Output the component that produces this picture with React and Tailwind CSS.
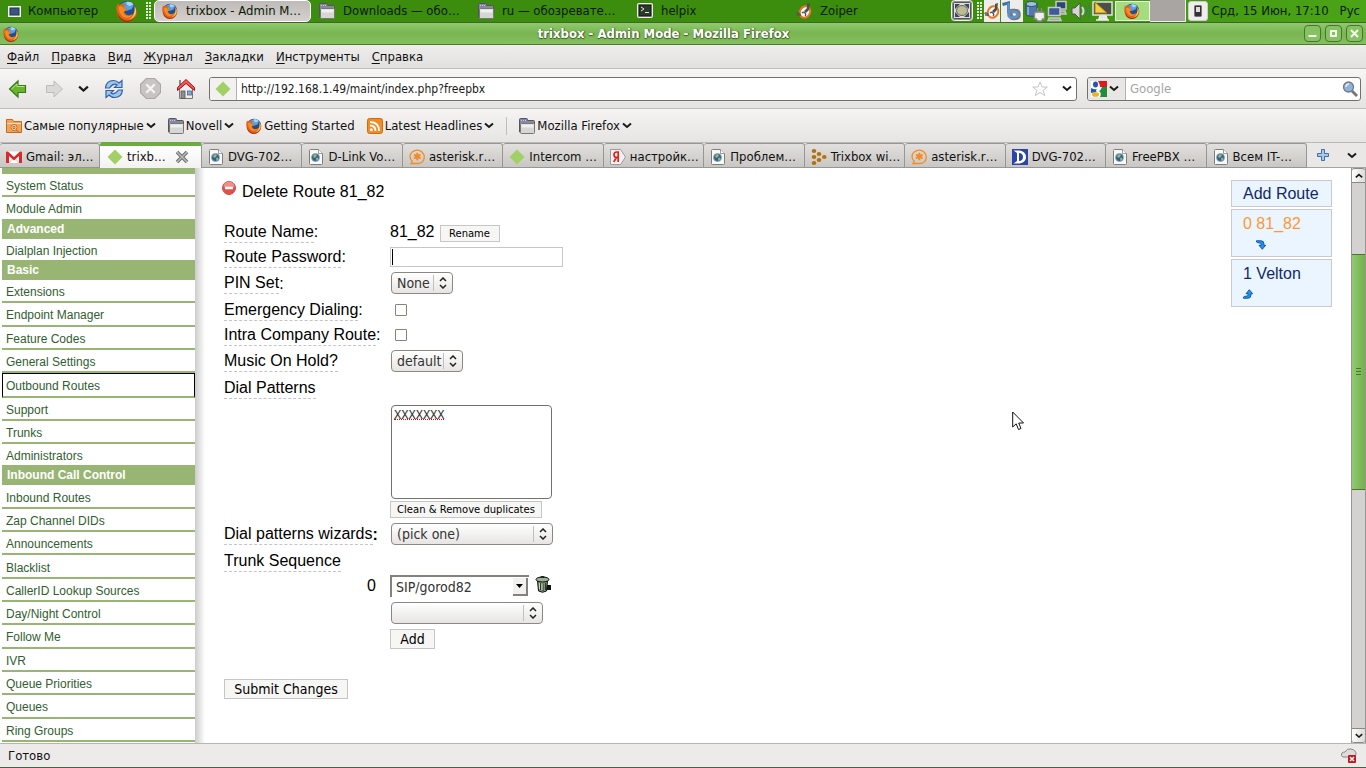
import React from "react";

const UI = "font-['DejaVu_Sans_Condensed','DejaVu_Sans',sans-serif]";

function Firefox({ className = "size-4" }) {
  return (
    <svg viewBox="0 0 32 32" className={`${className} shrink-0`} aria-hidden="true">
      <circle cx="16" cy="16" r="14.5" fill="#1d4f94" />
      <path d="M7 7C12 1 22 1 26 7l-3 6-8 3-6-2z" fill="#5b9fdc" />
      <path d="M15 3c4-1 8 0 10 3l-5 3-4-2z" fill="#a9d3f3" />
      <path d="M2 5c1 1 2 2 3 2 3-2 6-2 9 0-2 1-3 3-3 5l5 1c0 2-3 3-4 4 1 5 8 7 13 3 3-3 3-8 1-13 4 4 5 9 4 14-2 7-8 10-14 10C7 31 1 25 1 16 0 12 1 8 2 5z" fill="#e2631a" />
      <path d="M4 10c2-1 4-1 6 0 0 2 2 3 5 3-1 2-4 3-4 5 1 5 8 7 13 3-2 6-12 7-16 1-3-4-4-8-4-12z" fill="#f48c20" />
      <path d="M27 9c3 5 3 10 0 14-2 3-5 5-9 6 8-4 10-12 9-20z" fill="#fcd34a" />
      <path d="M2 16c1 7 6 13 14 14 5 0 9-2 12-6-3 6-8 8-13 8C7 31 2 25 2 16z" fill="#a82d0c" />
    </svg>
  );
}

function Folder({ className = "size-4" }) {
  return (
    <svg viewBox="0 0 16 16" className={`${className} shrink-0`} aria-hidden="true">
      <path d="M.5 14V1.500Q.5.5 1.500.5h6q1 0 1 1v1h6q1 0 1 1V14z" fill="#8b8b94" stroke="#55555c" />
      <path d="M1.500 1.500h6v2h-6z" fill="#7d7dc0" />
      <path d="M2 2.500h5" stroke="#c9c9ee" strokeDasharray="1 1" />
      <path d="M1.500 6.500Q1.500 5.500 2.500 5.500h12q1 0 1 1v8q0 1-1 1h-12q-1 0-1-1z" fill="#d6d6d4" stroke="#77777a" />
      <path d="M2.500 6.500h12v3h-12z" fill="#efefee" />
    </svg>
  );
}

function Chevron({ className = "w-[10px]" }) {
  return (
    <svg viewBox="0 0 10 7" className={`${className} shrink-0`} aria-hidden="true">
      <path d="M1 1.500l4 3.500 4-3.500" fill="none" stroke="#1a1a1a" strokeWidth="2" />
    </svg>
  );
}

function Diamond() {
  return (
    <svg viewBox="0 0 16 16" className="size-4 shrink-0" aria-hidden="true">
      <path d="M8 .5L15.500 8 8 15.500.5 8z" fill="#a2d067" />
    </svg>
  );
}

function GmailIcon() {
  return (
    <svg viewBox="0 0 16 16" className="size-4 shrink-0" aria-hidden="true">
      <rect x="0" y="2.500" width="16" height="11.500" rx="1" fill="#fff" />
      <path d="M3 14l4-5M13 14L9 9" stroke="#e3b6b3" />
      <path d="M0 14V3.500q0-1 1-1h1L8 8l6-5.500h1q1 0 1 1V14h-3V7l-5 4.500L3 7v7z" fill="#d9292b" />
    </svg>
  );
}

function PageGlobe() {
  return (
    <svg viewBox="0 0 16 16" className="size-4 shrink-0" aria-hidden="true">
      <path d="M1.500 1.500q0-1 1-1h8l4 4v10q0 1-1 1h-11q-1 0-1-1z" fill="#f8f8f7" stroke="#7d7e7c" />
      <path d="M10.500.5v4h4" fill="#fff" stroke="#9a9b99" />
      <circle cx="7.500" cy="8.500" r="4" fill="#2c5f9e" stroke="#8fa9c4" strokeWidth=".8" />
      <path d="M5 7l2-2 2 1-1 2-2 1zM8 9l2-.5.500 2-2 1.500z" fill="#9db85c" />
    </svg>
  );
}

function AsteriskIcon() {
  return (
    <svg viewBox="0 0 16 16" className="size-4 shrink-0" fill="none" stroke="#f58a1f" aria-hidden="true">
      <path d="M2 14.500h7c4 0 6.300-3 6.300-6.500S12 1.200 8.300 1.200 1 3.700 1 7.500c0 2 .8 3.500 2.200 4.800z" strokeWidth="1.300" />
      <path d="M8.300 3.800v7.400M5 5.700l6.600 3.700M11.600 5.700L5 9.400" strokeWidth="2" />
    </svg>
  );
}

function YandexIcon() {
  return (
    <svg viewBox="0 0 16 16" className="size-4 shrink-0" aria-hidden="true">
      <path d="M.5.5h10l5 7.500-5 7.500H.5z" fill="#f3f3f3" stroke="#9b9b9b" />
      <path d="M8.200 13V3H6.600C5 3 4 4 4 5.700S5 8.400 6.700 8.400h1.500M6.500 8.500L3.700 13" fill="none" stroke="#e0201b" strokeWidth="1.700" />
    </svg>
  );
}

function DotsIcon() {
  return (
    <svg viewBox="0 0 16 16" className="size-4 shrink-0" fill="#b3700f" aria-hidden="true">
      <ellipse cx="3" cy="2" rx="2.300" ry="2" />
      <ellipse cx="3" cy="8" rx="2.300" ry="2" />
      <ellipse cx="3" cy="14" rx="2.300" ry="2" />
      <ellipse cx="8" cy="5" rx="2.300" ry="2" />
      <ellipse cx="8" cy="11" rx="2.300" ry="2" />
      <ellipse cx="13.300" cy="8" rx="2.300" ry="2" />
    </svg>
  );
}

function DIcon() {
  return (
    <svg viewBox="0 0 16 16" className="size-4 shrink-0" aria-hidden="true">
      <rect width="16" height="16" fill="#2b44a8" />
      <path d="M1.500 1.500H6c5 0 8 2.500 8 6.500s-3 6.500-8 6.500H1.500L5 12V4z" fill="#fff" />
      <path d="M7 4c2.500 0 4 1.500 4 4s-1.500 4-4 4z" fill="#2b44a8" />
    </svg>
  );
}

function ZoiperIcon() {
  return (
    <svg viewBox="0 0 16 16" className="size-4 shrink-0" aria-hidden="true">
      <ellipse cx="9" cy="9" rx="5" ry="6" transform="rotate(30 9 9)" fill="#fff" stroke="#ee7226" strokeWidth="2" />
      <path d="M11 1l3-1-1 7-3 3-2-2 3-3z" fill="#4f4f52" />
      <path d="M6 10c2-2 5 1 3 3M1 11c0-2 2-1 3 0M1 12h4" stroke="#55555a" strokeWidth="1.300" fill="none" />
    </svg>
  );
}

function Grip() {
  return (
    <svg viewBox="0 0 6 18" className="h-[18px] w-[6px] shrink-0" fill="#e4efd9" aria-hidden="true">
      {[0, 3, 6, 9, 12, 15].map((y) => (
        <g key={y}>
          <rect x="0" y={y} width="2" height="2" />
          <rect x="3" y={y} width="2" height="2" />
        </g>
      ))}
    </svg>
  );
}

function Task({ icon, children, active }) {
  return (
    <button
      className={`mr-[2px] flex h-[22px] min-w-0 flex-[0_1_157px] items-center gap-2 rounded-[5px] border pr-[7px] text-left ${
        active ? "border-white bg-linear-to-b from-[#bdbab7] to-[#d4d1ce] pl-[7px]" : "border-transparent pl-[5px]"
      }`}
    >
      {icon}
      <span className="truncate">{children}</span>
    </button>
  );
}

function Tray() {
  return (
    <div className="flex h-full shrink-0 items-center">
      <svg viewBox="0 0 22 22" className="mr-1 size-[22px]" aria-hidden="true">
        <rect x=".5" y=".5" width="21" height="20" rx="3" fill="#8f918c" stroke="#f2f1f0" />
        <rect x="2.500" y="2.500" width="17" height="16" rx="1" fill="#dcdcda" stroke="#555" />
        <path d="M4 4h5L4 9zM18 4h-5l5 5zM4 17h5l-5-5zM18 17h-5l5-5z" fill="#33476b" />
        <ellipse cx="11" cy="10.500" rx="5.500" ry="5" fill="#bdbb94" stroke="#66674d" />
      </svg>
      <Grip />
      <span className="ml-px flex h-[22px] w-4 items-center bg-[#eeedeb]"><ZoiperIcon /></span>
      <svg viewBox="0 0 22 22" className="ml-px size-[22px] bg-[#eeedeb]" fill="none" aria-hidden="true">
        <path d="M1.500 4.500L7.500 3v10" stroke="#426fa9" strokeWidth="3" />
        <path d="M9.500 9v6q0 3 4 3t4-3.500-4-3.500h-3" stroke="#777b80" strokeWidth="4.500" />
        <path d="M7.500 3v12q0 2.500 4.500 2.500t4.500-3-4-3h-3" stroke="#5b93cc" strokeWidth="2.500" />
      </svg>
      <svg viewBox="0 0 22 22" className="ml-px size-[22px]" aria-hidden="true">
        <path d="M2 4v10c0 3 11 3 11 0V4z" fill="#5279ab" stroke="#2b4a75" />
        <ellipse cx="7.500" cy="4" rx="5.500" ry="2.500" fill="#a4bfdd" stroke="#2b4a75" />
        <path d="M4 7v8" stroke="#9fb9d8" strokeWidth="1.500" />
        <path d="M13.500 8v5M17.500 8v5M10.500 19v-5q0-2 2-2h6q2 0 2 2v5h-2l-1 2h-4l-1-2z" fill="#eeeeec" stroke="#8a8a88" strokeWidth="1.300" />
      </svg>
      <svg viewBox="0 0 22 22" className="ml-px size-[22px]" stroke="#c8c8c5" strokeWidth="1.500" aria-hidden="true">
        <rect x="9" y="1.500" width="10" height="7.500" fill="#29467a" />
        <path d="M10 11h8l1 3H9z" fill="#999" />
        <rect x="1.500" y="7.500" width="11.500" height="8" fill="#3b5c96" />
        <path d="M2 18h11l1 2.500H1z" fill="#9a9a98" />
      </svg>
      <svg viewBox="0 0 22 22" className="ml-px size-[22px]" fill="none" aria-hidden="true">
        <path d="M2 8h3l5-5v16l-5-5H2z" fill="#d5d5d3" stroke="#555" />
        <path d="M12 7q3 4 0 8" stroke="#d5d9dd" strokeWidth="2" />
        <path d="M15 5q4 6 0 12M18 4q4 7 0 14" stroke="#397a60" />
      </svg>
      <svg viewBox="0 0 22 22" className="size-[22px]" aria-hidden="true">
        <rect x="1" y="2" width="19" height="13" fill="#4d4d49" stroke="#e2e2de" strokeWidth="1.500" />
        <path d="M3 2v11h12z" fill="#f0cf45" stroke="#a77f11" />
        <path d="M8 16h6l1 3H7zM4 20h13" fill="#ddd" stroke="#eee" strokeWidth="1.500" />
      </svg>
      <span className="ml-px flex h-[20px] w-[35px] items-center justify-center border border-[#eef4e8] bg-[#a4dc80]"><Firefox /></span>
      <span className="h-[22px] w-[36px] border-r border-b border-[#eee] bg-[#a8a5a2]" />
      <span className="mr-1 ml-[2px] flex h-[20px] w-[20px] items-center justify-center rounded-[3px] border border-[#ccc] bg-[#efeeed]">
        <svg viewBox="0 0 8 12" className="h-3 w-2" aria-hidden="true">
          <rect x=".5" y=".5" width="7" height="11" rx="1" fill="#333" stroke="#777" />
          <rect x="2" y="2" width="4" height="5" fill="#ddd" />
        </svg>
      </span>
      <span className="whitespace-nowrap">Срд, 15 Июн, 17:10</span>
      <span className="mr-[6px] ml-[11px]">Рус</span>
    </div>
  );
}

function Panel() {
  return (
    <header className="flex h-[23px] items-center border-b border-[#48603a] bg-linear-to-r from-[#3c8c0e] from-70% to-[#4ba517] text-[13px] text-[#0c1a04]">
      <button className="ml-2 flex w-[108px] shrink-0 items-center gap-[7px]">
        <svg viewBox="0 0 13 11" className="w-[13px]" aria-hidden="true">
          <rect x=".5" y=".5" width="12" height="10" fill="#e9e9e7" stroke="#f4f4f2" />
          <rect x="2" y="2" width="9" height="7" fill="#3a5580" stroke="#1f3354" />
        </svg>
        Компьютер
      </button>
      <button aria-label="Firefox"><Firefox className="size-[22px]" /></button>
      <span className="mr-[2px] ml-2"><Grip /></span>
      <nav className="flex min-w-0 flex-1">
        <Task active icon={<Firefox />}>trixbox - Admin M…</Task>
        <Task icon={<Folder />}>Downloads — обо…</Task>
        <Task icon={<Folder />}>ru — обозревате…</Task>
        <Task
          icon={
            <svg viewBox="0 0 16 16" className="size-4 shrink-0" aria-hidden="true">
              <rect x=".5" y=".5" width="15" height="14" rx="1" fill="#c9c9c5" stroke="#eee" />
              <rect x="2" y="2" width="12" height="11" fill="#2c3a2a" stroke="#111" />
              <path d="M4 4l3 2-3 2M8 9.500h4" stroke="#dfe8d8" fill="none" />
            </svg>
          }
        >
          helpix
        </Task>
        <Task icon={<ZoiperIcon />}>Zoiper</Task>
      </nav>
      <Tray />
    </header>
  );
}

function WindowButton({ label, children }) {
  return (
    <button aria-label={label} className="flex size-[17px] items-center justify-center rounded-[4px] border border-[#4b7330] bg-[#86c262]">
      <svg viewBox="0 0 11 11" className="size-[11px]" fill="none" stroke="#f4faee" strokeWidth="2" aria-hidden="true">{children}</svg>
    </button>
  );
}

function TitleBar() {
  return (
    <div className="flex h-[22px] items-center border-b border-[#4e7934] bg-linear-to-b from-[#8fca6c] via-[#79b551] to-[#84c05f] px-[3px]">
      <Firefox />
      <h1 className="flex-1 pl-1 text-center text-[13px] font-bold text-white [text-shadow:0_1px_1px_#3b5c26,1px_0_1px_#3b5c26]">
        trixbox - Admin Mode - Mozilla Firefox
      </h1>
      <div className="flex gap-1">
        <WindowButton label="Свернуть"><path d="M1.500 8h8" strokeWidth="2" /></WindowButton>
        <WindowButton label="Развернуть"><rect x="3" y="3" width="5" height="5" /></WindowButton>
        <WindowButton label="Закрыть"><path d="M2 2l7 7M9 2L2 9" /></WindowButton>
      </div>
    </div>
  );
}

const menus = ["Файл", "Правка", "Вид", "Журнал", "Закладки", "Инструменты", "Справка"];

function MenuBar() {
  return (
    <nav className="flex h-6 items-center gap-3 border-b border-[#bfbdba] bg-linear-to-b from-[#eeedec] to-[#e3e1df] px-[7px] pt-px text-[13px]">
      {menus.map((m) => (
        <button key={m}>
          <span className="underline underline-offset-2">{m[0]}</span>
          {m.slice(1)}
        </button>
      ))}
    </nav>
  );
}

function NavBar() {
  return (
    <div className="flex h-10 items-center border-b border-[#c1bfbd] bg-linear-to-b from-[#f7f6f5] to-[#e5e3e1] pr-[5px] pl-2">
      <button aria-label="Назад" className="mr-4">
        <svg viewBox="0 0 20 20" className="size-5" aria-hidden="true">
          <path d="M1.500 10L10 2v4.500h7.500v7H10V18z" fill="#6bb52c" stroke="#3a7a12" strokeWidth="1.200" />
          <path d="M3.500 10L9 5v2.500h7.500" fill="none" stroke="#b7e28e" />
        </svg>
      </button>
      <button aria-label="Вперёд" className="mr-[14px]">
        <svg viewBox="0 0 20 20" className="size-5" aria-hidden="true">
          <path d="M18.500 10L10 2v4.500H2.500v7H10V18z" fill="#dad9d8" stroke="#bdbcba" />
        </svg>
      </button>
      <button aria-label="История" className="mr-[15px]"><Chevron className="w-[11px]" /></button>
      <button aria-label="Обновить" className="mr-4">
        <svg viewBox="0 0 20 20" className="size-5" aria-hidden="true">
          <path d="M1.500 9C2 4 5 1.500 9.500 1.500c2.500 0 4 1 5.500 2.500l3-2.500v7h-7.500l2.500-2.500Q9.500 3.500 5.500 9z" fill="#a3c5ea" stroke="#2f62a5" strokeWidth="1.200" />
          <path d="M18.500 11c-.5 5-3.500 7.500-8 7.500-2.500 0-4-1-5.500-2.500l-3 2.500v-7h7.500L7 14q3.500 2.500 7.500-3z" fill="#a3c5ea" stroke="#2f62a5" strokeWidth="1.200" />
        </svg>
      </button>
      <button aria-label="Остановить" className="mr-[15px]">
        <svg viewBox="0 0 20 20" className="size-[21px]" aria-hidden="true">
          <path d="M6 .5h8L19.500 6v8L14 19.500H6L.5 14V6z" fill="#c8c4c4" stroke="#aaa6a6" />
          <path d="M6 6l8 8M14 6l-8 8" stroke="#f5f3f3" strokeWidth="2.200" />
        </svg>
      </button>
      <button aria-label="Домой" className="mr-[13px]">
        <svg viewBox="0 0 20 22" className="h-[22px] w-5" aria-hidden="true">
          <path d="M3.500 11v9.500h13V11L10 5z" fill="#efeeec" stroke="#777" />
          <path d="M4 2v5" stroke="#888" strokeWidth="2" />
          <path d="M1.500 12.500v-3L10 1.500l8.500 8v3L10 5.500z" fill="#ee5a5a" stroke="#b40e0e" />
          <rect x="5" y="13" width="4" height="7.500" fill="#8d8d8a" stroke="#555" strokeWidth=".8" />
          <rect x="11.500" y="13" width="4" height="4" fill="#88a8cf" stroke="#4c6a92" strokeWidth=".8" />
        </svg>
      </button>
      <div className="flex h-6 flex-1 items-center overflow-hidden rounded-[3px] border border-[#74716d] bg-white">
        <span className="mr-1 flex h-full items-center border-r border-[#b3b1ae] bg-[#f2f1f0] px-[5px]"><Diamond /></span>
        <input aria-label="Адрес" className="min-w-0 flex-1 text-[12px] text-[#1a1a1a] outline-none" defaultValue="http://192.168.1.49/maint/index.php?freepbx" />
        <svg viewBox="0 0 16 16" className="mr-[14px] size-4" aria-hidden="true">
          <path d="M8 1l2 5h5.300l-4.200 3.300 1.600 5.200L8 11.500l-4.700 3 1.600-5.200L.7 6H6z" fill="#fff" stroke="#c4c4c4" />
        </svg>
        <button aria-label="Показать историю" className="mr-1"><Chevron /></button>
      </div>
      <div className="ml-[10px] flex h-6 w-[274px] items-center overflow-hidden rounded-[3px] border border-[#74716d] bg-white">
        <button aria-label="Поисковая система" className="flex h-full w-[38px] shrink-0 items-center gap-[2px] border-r border-[#b3b1ae] bg-[#e9e7e6] pl-[3px]">
          <svg viewBox="0 0 16 16" className="size-4" aria-hidden="true">
            <rect width="16" height="16" fill="#fff" />
            <path d="M7 0h9v6H9q0-3-2-6z" fill="#e01a1c" />
            <path d="M16 6v10H9q2-4-1-6 2-1 3-4z" fill="#1f8f3c" />
            <ellipse cx="4.500" cy="3.500" rx="2.500" ry="3" fill="#2257b5" />
            <path d="M0 7q4 2 6 1-2 2 0 3l-6 1z" fill="#2257b5" />
            <ellipse cx="4.500" cy="13.500" rx="3.500" ry="2.300" fill="#f0b419" />
          </svg>
          <Chevron />
        </button>
        <input aria-label="Поиск" placeholder="Google" className="min-w-0 flex-1 pl-1 text-[13px] outline-none placeholder:text-[#a5a5a5]" />
        <button aria-label="Искать" className="mr-[2px]">
          <svg viewBox="0 0 16 16" className="size-4" aria-hidden="true">
            <path d="M10 10l5 5" stroke="#77777a" strokeWidth="2.800" />
            <circle cx="6.500" cy="6" r="5" fill="#8cb4e2" stroke="#77777a" strokeWidth="1.300" />
            <path d="M4 6q0-3 3-3" stroke="#e4effa" strokeWidth="1.500" fill="none" />
          </svg>
        </button>
      </div>
    </div>
  );
}

function Bookmark({ icon, children, menu }) {
  return (
    <button className="flex items-center gap-[2px] whitespace-nowrap">
      {icon}
      {children}
      {menu && <Chevron />}
    </button>
  );
}

function Bookmarks() {
  return (
    <nav className="flex h-[33px] items-center gap-3 bg-linear-to-b from-[#f5f4f3] to-[#e7e5e3] px-[6px] text-[13px]">
      <Bookmark
        menu
        icon={
          <svg viewBox="0 0 16 16" className="size-4" aria-hidden="true">
            <path d="M.5 14.500v-13h6l1 2h8v11z" fill="#f1a35c" stroke="#c66a1b" />
            <path d="M1 5.500h14" stroke="#fadfc2" />
            <circle cx="8" cy="9.500" r="3" fill="#fbe6cf" stroke="#c66a1b" />
            <path d="M10 12l3 2M7 8.500h2v2H7z" stroke="#c66a1b" fill="none" />
          </svg>
        }
      >
        Самые популярные
      </Bookmark>
      <Bookmark menu icon={<Folder />}>Novell</Bookmark>
      <Bookmark icon={<Firefox />}>Getting Started</Bookmark>
      <Bookmark
        menu
        icon={
          <svg viewBox="0 0 16 16" className="size-4" fill="none" stroke="#fff" strokeWidth="1.800" aria-hidden="true">
            <rect x=".5" y=".5" width="15" height="15" rx="2" fill="#f28a25" stroke="#d06c10" strokeWidth="1" />
            <path d="M3 4q9 0 9 9M3 7.500q5.500 0 5.500 5.500" />
            <circle cx="4.300" cy="11.700" r="1.500" fill="#fff" stroke="none" />
          </svg>
        }
      >
        Latest Headlines
      </Bookmark>
      <span className="h-[18px] border-l border-[#c0bebb]" />
      <Bookmark menu icon={<Folder />}>Mozilla Firefox</Bookmark>
    </nav>
  );
}

const tabs = [
  ["DVG-702…", PageGlobe],
  ["D-Link Vo…", PageGlobe],
  ["asterisk.r…", AsteriskIcon],
  ["Intercom …", Diamond],
  ["настройк…", YandexIcon],
  ["Проблем…", PageGlobe],
  ["Trixbox wi…", DotsIcon],
  ["asterisk.r…", AsteriskIcon],
  ["DVG-702…", DIcon],
  ["FreePBX …", PageGlobe],
  ["Всем IT-…", PageGlobe],
];

const TAB =
  "flex h-[25px] min-w-0 items-center gap-1 overflow-hidden whitespace-nowrap rounded-t-[3px] border border-l-0 border-[#989693] bg-linear-to-b from-[#e2e0de] to-[#c9c7c3] pt-[2px] pl-[6px]";

function Tabs() {
  return (
    <div role="tablist" className="flex h-[26px] items-end border-t border-[#bbb9b6] bg-[#eae8e6] text-[13px]">
      <button role="tab" className={`${TAB} w-[100px] shrink-0`}><GmailIcon />Gmail: эл…</button>
      <div role="tab" aria-selected="true" className="flex h-[26px] w-[102px] shrink-0 items-center gap-1 rounded-t-[3px] border-t-4 border-r border-[#989693] border-t-[#6aab42] bg-linear-to-b from-white to-[#f3f2f1] pl-[7px]">
        <Diamond />
        <span className="flex-1">trixb…</span>
        <button aria-label="Закрыть вкладку" className="mr-3">
          <svg viewBox="0 0 14 14" className="w-[14px]" aria-hidden="true">
            <path d="M2 2l10 10M12 2L2 12" stroke="#6f6f6f" strokeWidth="3.600" />
            <path d="M2 2l10 10M12 2L2 12" stroke="#b9b9b9" strokeWidth="1.500" />
          </svg>
        </button>
      </div>
      {tabs.map(([label, Icon], i) => (
        <button role="tab" key={i} className={`${TAB} flex-1`}><Icon />{label}</button>
      ))}
      <div className="flex h-full w-[59px] shrink-0 items-center justify-end gap-[18px] border-b border-[#a5a3a0] pr-[9px]">
        <button aria-label="Новая вкладка">
          <svg viewBox="0 0 12 12" className="w-3" aria-hidden="true">
            <path d="M4.500.5h3v4h4v3h-4v4h-3v-4h-4v-3h4z" fill="#a8c6e8" stroke="#3f6ea8" />
          </svg>
        </button>
        <button aria-label="Список вкладок"><Chevron /></button>
      </div>
    </div>
  );
}

const groups = [
  [null, ["System Status", "Module Admin"]],
  ["Advanced", ["Dialplan Injection"]],
  ["Basic", ["Extensions", "Endpoint Manager", "Feature Codes", "General Settings", "Outbound Routes", "Support", "Trunks", "Administrators"]],
  ["Inbound Call Control", ["Inbound Routes", "Zap Channel DIDs", "Announcements", "Blacklist", "CallerID Lookup Sources", "Day/Night Control", "Follow Me", "IVR", "Queue Priorities", "Queues", "Ring Groups"]],
];

function Sidebar() {
  return (
    <nav className="flex w-[195px] shrink-0 flex-col pb-px pl-[2px] text-[12px] text-[#306030]">
      <div className="h-[6px] shrink-0 bg-[#98b574]" />
      {groups.map(([title, items], g) => (
        <React.Fragment key={g}>
          {title && <h2 className="h-5 shrink-0 bg-[#98b574] pl-[5px] leading-5 font-bold text-white">{title}</h2>}
          {items.map((item, i) => {
            const last = i === items.length - 1 && g < groups.length - 1;
            const current = item === "Outbound Routes";
            return (
              <a
                key={item}
                href="#"
                className={`flex min-h-[21px] flex-1 items-center border-[#98b574] pt-[3px] ${last ? "" : "border-b-2"} ${
                  current ? "border-x border-t border-x-black border-t-black pl-[3px]" : "pl-1"
                }`}
              >
                {item}
              </a>
            );
          })}
        </React.Fragment>
      ))}
    </nav>
  );
}

function Hint({ children }) {
  return <span className="inline-block border-b border-dashed border-[#c4c4c4] pt-px leading-5">{children}</span>;
}

function Row({ label, id, tail = ":", tall, children }) {
  return (
    <>
      <label htmlFor={id} className={`flex items-center whitespace-nowrap ${tall ? "h-7" : "h-[25px]"}`}>
        <Hint>{label}</Hint>
        <span className="pt-px">{tail}</span>
      </label>
      <div className="flex items-center">{children}</div>
    </>
  );
}

function Select({ id, label, value, className }) {
  return (
    <span className="ml-px inline-grid">
      <select
        id={id}
        aria-label={label}
        className={`${UI} col-start-1 row-start-1 h-[22px] appearance-none rounded-[4px] border border-[#8b8884] bg-linear-to-b from-white to-[#e6e5e3] pl-[5px] text-[14px] text-[#333] ${className}`}
      >
        <option>{value}</option>
      </select>
      <span className="pointer-events-none col-start-1 row-start-1 my-[3px] mr-px flex w-[19px] items-center justify-center justify-self-end border-l border-[#c2c0bd]">
        <svg viewBox="0 0 8 12" className="h-3 w-2" fill="none" stroke="#222" strokeWidth="1.500" aria-hidden="true">
          <path d="M1 4l3-3 3 3M1 8l3 3 3-3" />
        </svg>
      </span>
    </span>
  );
}

const BTN = "block border border-[#c6c6c6] bg-[#f6f6f4] text-center text-black whitespace-nowrap leading-none";
const BTN_SMALL = `${BTN} h-[17px] font-['DejaVu_Sans',sans-serif] text-[10px]`;
const BTN_LARGE = `${BTN} ${UI} h-5 text-[14px]`;

function Trash() {
  return (
    <svg viewBox="0 0 17 17" className="size-[17px]" aria-hidden="true">
      <path d="M11 9h5v5h-5z" fill="#111" />
      <path d="M2.500 5l1 10q4 2.500 8 0l1-10z" fill="#7f9478" stroke="#111" />
      <path d="M5.500 7v7M8 7.500V15M10.500 7v7" stroke="#2b3a28" strokeWidth="1" />
      <path d="M4.500 7v6M7 7.500V14" stroke="#c8d6c2" strokeWidth="1" />
      <ellipse cx="7.500" cy="3.500" rx="6.500" ry="2.500" fill="#9bb093" stroke="#111" />
      <path d="M5.500 1.500q2-1.500 4 0" fill="none" stroke="#111" strokeWidth="1.300" />
    </svg>
  );
}

function RouteForm() {
  return (
    <form className="flex-1 pt-3 pl-[19px] text-[16px] text-black" onSubmit={(e) => e.preventDefault()}>
      <a href="#" className="-ml-[2px] flex h-[39px] gap-[6px] leading-[23px]">
        <svg viewBox="0 0 14 14" className="mt-[1px] size-[14px]" aria-hidden="true">
          <circle cx="7" cy="7" r="6.500" fill="#e2504b" stroke="#c9504c" />
          <path d="M1.500 6a5.500 5.500 0 0111 0q-5 2-11 0z" fill="#ef8f8a" />
          <rect x="3" y="5.700" width="8" height="2.600" rx=".5" fill="#fff" />
        </svg>
        Delete Route 81_82
      </a>
      <div className="grid grid-cols-[160px_1fr] gap-x-[6px]">
        <Row label="Route Name">
          81_82
          <button className={`${BTN_SMALL} mt-1 ml-[5px] w-[60px]`}>Rename</button>
        </Row>
        <Row label="Route Password" id="pw">
          <span className="inline-grid items-center">
            <input id="pw" type="text" className="col-start-1 row-start-1 h-5 w-[173px] border border-[#c6c6c6] bg-white pl-1 text-[14px] outline-none" />
            <span className="pointer-events-none col-start-1 row-start-1 ml-[2px] h-4 w-px bg-black" />
          </span>
        </Row>
        <Row label="PIN Set" id="pin" tall><Select id="pin" value="None" className="w-[62px]" /></Row>
        <Row label="Emergency Dialing" id="em">
          <input id="em" type="checkbox" className="ml-[5px] size-3 appearance-none rounded-[1px] border border-[#87827a] bg-white" />
        </Row>
        <Row label="Intra Company Route" id="intra">
          <input id="intra" type="checkbox" className="ml-[5px] size-3 appearance-none rounded-[1px] border border-[#87827a] bg-white" />
        </Row>
        <Row label="Music On Hold?" id="moh" tail="" tall><Select id="moh" value="default" className="w-[72px]" /></Row>
        <Row label="Dial Patterns" id="patterns" tail="" />
        <div className="col-start-2 flex flex-col items-start gap-[2px] pt-[5px] pb-[2px]">
          <span className="ml-px inline-grid items-start">
            <textarea
              id="patterns"
              spellCheck={false}
              defaultValue="XXXXXXX"
              className="col-start-1 row-start-1 h-[94px] w-[161px] resize-none rounded-[4px] border border-[#74716d] bg-white px-[2px] font-['DejaVu_Sans_Mono',monospace] text-[12px] leading-[18px] text-[#333] outline-none"
            />
            <span className="pointer-events-none col-start-1 row-start-1 mt-[14px] ml-[3px] w-[50px] border-b border-dotted border-red-600" />
          </span>
          <button className={`${BTN_SMALL} w-[152px]`}>Clean &amp; Remove duplicates</button>
        </div>
        <Row label="Dial patterns wizards" id="wiz" tail={<b>:</b>} tall><Select id="wiz" value="(pick one)" className="w-[162px]" /></Row>
        <Row label="Trunk Sequence" tail="" />
        <span className="self-center pr-2 text-right">0</span>
        <div className="flex h-[26px] items-center gap-[6px]">
          <span className="inline-grid">
            <select aria-label="Trunk 0" className={`${UI} col-start-1 row-start-1 h-[22px] w-[139px] appearance-none border-t-2 border-l-2 border-[#85827e] bg-white pb-[2px] pl-1 text-[14px] text-[#333]`}>
              <option>SIP/gorod82</option>
            </select>
            <span className="pointer-events-none col-start-1 row-start-1 mt-[3px] mb-px mr-px flex w-[15px] items-center justify-center justify-self-end border-r-2 border-b-2 border-[#85827e] bg-[#f2f1f0]">
              <svg viewBox="0 0 7 4" className="w-[7px]" aria-hidden="true"><path d="M0 0h7L3.500 4z" fill="#000" /></svg>
            </span>
          </span>
          <button aria-label="Delete trunk" className="mb-1"><Trash /></button>
        </div>
        <div className="col-start-2 flex h-7 items-center"><Select label="New trunk" value="" className="w-[152px]" /></div>
        <div className="col-start-2 pt-[2px]"><button className={`${BTN_LARGE} w-[45px]`}>Add</button></div>
      </div>
      <button className={`${BTN_LARGE} mt-[30px] w-[124px]`}>Submit Changes</button>
    </form>
  );
}

const CARD = "border border-[#c8cacc] bg-[#eaf5ff] px-[11px]";

function Routes() {
  return (
    <aside className="mr-[19px] flex w-[101px] shrink-0 flex-col gap-[2px] pt-3 text-[16px] text-[#10296b]">
      <a href="#" className={`${CARD} h-[27px] leading-[25px] whitespace-nowrap`}>Add Route</a>
      <div className={`${CARD} h-12 leading-[27px] text-[#ff9933]`}>
        <a href="#" className="block">0 81_82</a>
        <button aria-label="Move down" className="mt-[3px] ml-[13px] block">
          <svg viewBox="0 0 10 10" className="size-[10px]" aria-hidden="true">
            <path d="M.5 2V.7h4.300Q8 .7 8 4v1.300h1.700L6.300 9.300 3 5.300h2V4Q5 3 4 3 1.500 3 .5 2z" fill="#1e96f0" stroke="#0a3f96" strokeWidth=".8" />
          </svg>
        </button>
      </div>
      <div className={`${CARD} h-12 leading-[27px]`}>
        <a href="#" className="block">1 Velton</a>
        <button aria-label="Move up" className="mt-[2px] block">
          <svg viewBox="0 0 10 10" className="size-[10px]" aria-hidden="true">
            <path d="M.5 8v1.300h4.300Q8 9.300 8 6V4.700h1.700L6.300.7 3 4.700h2V6Q5 7 4 7 1.500 7 .5 8z" fill="#1e96f0" stroke="#0a3f96" strokeWidth=".8" />
          </svg>
        </button>
      </div>
    </aside>
  );
}

function Scrollbar() {
  return (
    <div aria-hidden="true" className="flex w-[15px] shrink-0 flex-col border-x border-[#999691] bg-[#d4d2d0]">
      <span className="flex h-[15px] items-center justify-center rounded-t-[3px] border-y border-[#8b8884] bg-linear-to-r from-white to-[#dddbd9]">
        <Chevron className="w-2 rotate-180" />
      </span>
      <span className="flex-[71]" />
      <span className="flex flex-[236] flex-col items-center justify-center gap-[2px] border-y border-[#4a742f] bg-linear-to-r from-[#90cb6e] to-[#74b04c]">
        <i className="h-px w-[5px] bg-[#4a742f]" />
        <i className="h-px w-[5px] bg-[#4a742f]" />
        <i className="h-px w-[5px] bg-[#4a742f]" />
      </span>
      <span className="flex-[239]" />
      <span className="flex h-[15px] items-center justify-center rounded-b-[3px] border-y border-[#8b8884] bg-linear-to-r from-white to-[#dddbd9]">
        <Chevron className="w-2" />
      </span>
    </div>
  );
}

export default function App() {
  return (
    <div className={`${UI} relative flex min-h-screen flex-col overflow-hidden bg-white text-[#111]`}>
      <Panel />
      <TitleBar />
      <MenuBar />
      <NavBar />
      <Bookmarks />
      <Tabs />
      <main className="flex flex-1 font-['Liberation_Sans',Arial,sans-serif]">
        <Sidebar />
        <div className="w-[10px] shrink-0 bg-linear-to-r from-[#cccccc] to-white" />
        <RouteForm />
        <Routes />
        <Scrollbar />
      </main>
      <footer className="flex h-[25px] items-center justify-between border-t border-b border-t-[#b7b5b2] border-b-[#4c6140] bg-[#edebe9] pr-[9px] pl-2 text-[13px]">
        Готово
        <svg viewBox="0 0 17 15" className="h-[15px] w-[17px]" aria-hidden="true">
          <path d="M3 9q-3-1-1-4 1-1 3-1 2-4 6-3 5 1 5 5 0 3-3 3z" fill="#dedcda" stroke="#8a8886" />
          <rect x="8" y="7" width="8" height="8" rx="1" fill="#c4161c" />
          <path d="M10 9l4 4M14 9l-4 4" stroke="#fff" strokeWidth="1.500" />
        </svg>
      </footer>
      <svg viewBox="0 0 13 20" className="pointer-events-none absolute top-[411px] left-[1012px] h-5 w-[13px]" aria-hidden="true">
        <path d="M.7 1v15l3.500-3.200 2.300 5.700 2.500-1-2.300-5.500h4.800z" fill="#fff" stroke="#111" />
      </svg>
    </div>
  );
}
